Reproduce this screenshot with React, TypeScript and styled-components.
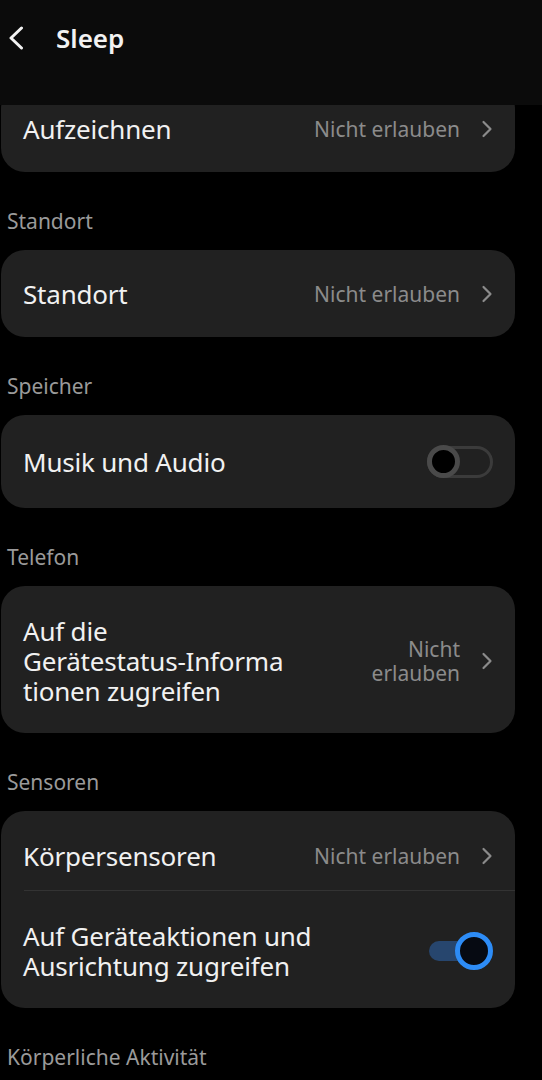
import React from "react";
import styled, { createGlobalStyle } from "styled-components";

const Global = createGlobalStyle`
  html, body { margin: 0; padding: 0; background: #000; }
  body {
    font-family: "Noto Sans", "Open Sans", sans-serif;
    -webkit-font-smoothing: antialiased;
  }
  * { box-sizing: border-box; }
`;

const Screen = styled.div`
  width: 542px;
  height: 1080px;
  display: flex;
  flex-direction: column;
  background: #000;
  overflow: hidden;
`;

const Header = styled.header`
  flex: none;
  height: 105px;
  background: #0b0b0b;
`;

const HeaderBar = styled.div`
  height: 76px;
  display: flex;
  align-items: center;
  padding-left: 8px;
  gap: 32px;
`;

const BackButton = styled.button`
  border: 0;
  background: none;
  padding: 0;
  display: flex;
  align-items: center;
  cursor: pointer;
`;

const Title = styled.h1`
  margin: 0;
  font-size: 26px;
  font-weight: 600;
  color: #f2f2f2;
  line-height: 30px;
`;

const Scroller = styled.div`
  flex: 1;
  overflow: hidden;
`;

const List = styled.div`
  margin-top: -20px;
  padding: 0 27px 0 1px;
  display: flex;
  flex-direction: column;
`;

const SectionLabel = styled.div`
  padding: 35px 6px 15px;
  font-size: 21px;
  line-height: 28px;
  color: #9a9a9a;
`;

const Card = styled.div`
  background: #212121;
  border-radius: 24px;
  overflow: hidden;
`;

const Row = styled.div<{ $h: number; $pt?: number; $pb?: number }>`
  display: flex;
  align-items: center;
  gap: 16px;
  height: ${(p) => p.$h}px;
  padding: ${(p) => p.$pt ?? 0}px 22px ${(p) => p.$pb ?? 0}px 22px;
`;

const Divider = styled.div`
  height: 1px;
  margin-left: 23px;
  background: #333333;
`;

const RowTitle = styled.div`
  flex: 1;
  font-size: 26px;
  line-height: 30px;
  letter-spacing: -0.2px;
  color: #f1f1f1;
`;

const Trailing = styled.div`
  display: flex;
  align-items: center;
  gap: 21px;
`;

const Value = styled.div`
  font-size: 21px;
  line-height: 24px;
  color: #8b8b8b;
  text-align: right;
`;

const SwitchOff = styled.span`
  width: 66px;
  height: 32px;
  border: 3.5px solid #3b3b3b;
  border-radius: 16px;
  display: flex;
  align-items: center;
`;

const KnobOff = styled.span`
  flex: none;
  width: 33px;
  height: 33px;
  margin-left: -3.5px;
  border-radius: 50%;
  border: 5px solid #4a4a4a;
  background: #000;
`;

const SwitchOn = styled.span`
  display: flex;
  align-items: center;
`;

const TrackOn = styled.span`
  flex: none;
  width: 50px;
  height: 20px;
  margin-right: -24px;
  border-radius: 10px;
  background: #27466e;
`;

const KnobOn = styled.span`
  flex: none;
  width: 38px;
  height: 38px;
  border-radius: 50%;
  border: 5px solid #2d8cf6;
  background: #060a12;
`;

const Chevron = () => (
  <svg width="12" height="20" viewBox="0 0 12 20" fill="none">
    <path
      d="M2.5 3 L9.5 10 L2.5 17"
      stroke="#8b8b8b"
      strokeWidth="2.2"
      strokeLinecap="round"
      strokeLinejoin="round"
    />
  </svg>
);

const BackIcon = () => (
  <svg width="16" height="24" viewBox="0 0 16 24" fill="none">
    <path
      d="M13.5 2 L3 12 L13.5 22"
      stroke="#f2f2f2"
      strokeWidth="3"
      strokeLinecap="round"
      strokeLinejoin="round"
    />
  </svg>
);

const Denied = ({ children }: { children: React.ReactNode }) => (
  <Trailing>
    <Value>{children}</Value>
    <Chevron />
  </Trailing>
);

export default function App() {
  return (
    <Screen>
      <Global />
      <Header>
        <HeaderBar>
          <BackButton aria-label="Zurück">
            <BackIcon />
          </BackButton>
          <Title>Sleep</Title>
        </HeaderBar>
      </Header>
      <Scroller>
        <List>
          <Card>
            <Row $h={87}>
              <RowTitle>Aufzeichnen</RowTitle>
              <Denied>Nicht erlauben</Denied>
            </Row>
          </Card>

          <SectionLabel>Standort</SectionLabel>
          <Card>
            <Row $h={87}>
              <RowTitle>Standort</RowTitle>
              <Denied>Nicht erlauben</Denied>
            </Row>
          </Card>

          <SectionLabel>Speicher</SectionLabel>
          <Card>
            <Row $h={93}>
              <RowTitle>Musik und Audio</RowTitle>
              <SwitchOff>
                <KnobOff />
              </SwitchOff>
            </Row>
          </Card>

          <SectionLabel>Telefon</SectionLabel>
          <Card>
            <Row $h={147} $pt={3}>
              <RowTitle>
                Auf die
                <br />
                Gerätestatus-Informa
                <br />
                tionen zugreifen
              </RowTitle>
              <Denied>
                Nicht
                <br />
                erlauben
              </Denied>
            </Row>
          </Card>

          <SectionLabel>Sensoren</SectionLabel>
          <Card>
            <Row $h={79} $pt={10}>
              <RowTitle>Körpersensoren</RowTitle>
              <Denied>Nicht erlauben</Denied>
            </Row>
            <Divider />
            <Row $h={117} $pt={3}>
              <RowTitle>
                Auf Geräteaktionen und
                <br />
                Ausrichtung zugreifen
              </RowTitle>
              <SwitchOn>
                <TrackOn />
                <KnobOn />
              </SwitchOn>
            </Row>
          </Card>

          <SectionLabel>Körperliche Aktivität</SectionLabel>
        </List>
      </Scroller>
    </Screen>
  );
}
